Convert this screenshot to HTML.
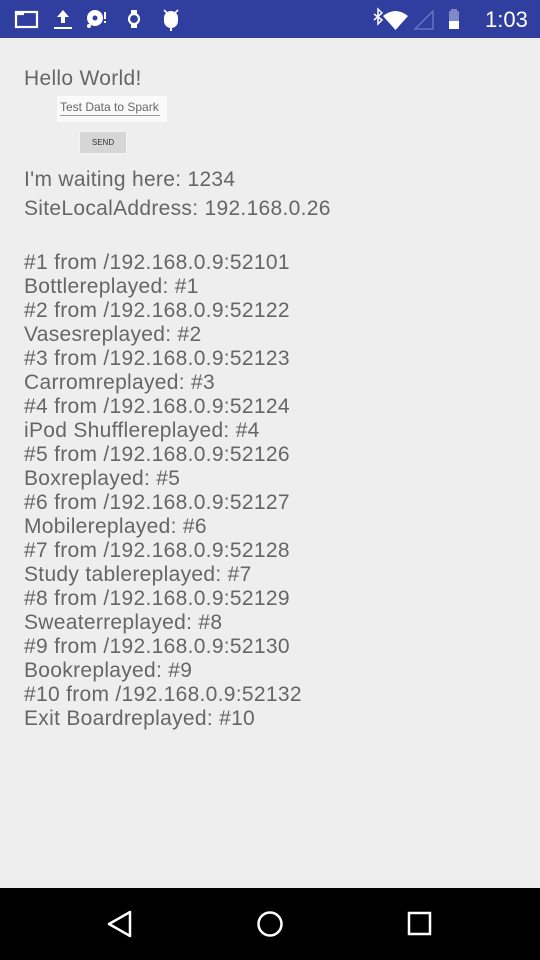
<!DOCTYPE html>
<html><head><style>
body{margin:0;width:540px;height:960px;background:#eeeeee;position:relative;overflow:hidden;font-family:"Liberation Sans",sans-serif;}
.sb{position:absolute;left:0;top:0;width:540px;height:38px;background:#303f9f;}
.nav{position:absolute;left:0;top:888px;width:540px;height:72px;background:#000;}
.t{position:absolute;left:24px;color:#666;font-size:21px;letter-spacing:0.3px;white-space:nowrap;}
.list{position:absolute;left:24px;top:251px;color:#666;font-size:21px;letter-spacing:0.3px;line-height:24px;white-space:pre;}
</style></head><body>
<div class="sb">
<svg width="540" height="38" style="position:absolute;left:0;top:0">
<g fill="none" stroke="#fff" stroke-width="2.2">
<rect x="16" y="12" width="21" height="15"/><path d="M16 14h8"/>
</g>
<path d="M63 10l-6 7h4v6h4v-6h4z M54 27h18v2H54z" fill="#fff"/>
<circle cx="95" cy="18" r="8" fill="#fff"/><circle cx="95" cy="18" r="2.5" fill="#303f9f"/><circle cx="89" cy="26" r="2" fill="#fff"/><rect x="104" y="12" width="2" height="7" fill="#fff"/><rect x="104" y="21" width="2" height="2" fill="#fff"/>
<circle cx="134" cy="19" r="5" fill="none" stroke="#fff" stroke-width="2.2"/><rect x="131" y="10" width="6" height="4" fill="#fff"/><rect x="131" y="24" width="6" height="4" fill="#fff"/>
<path d="M164 18a7 7 0 0 1 14 0v3a7 7 0 0 1-14 0z" fill="#fff"/><rect x="170" y="26" width="2" height="5" fill="#fff"/><path d="M164 10l3 3M178 10l-3 3" stroke="#fff" stroke-width="1.6"/>
<path d="M374 14l8 6-4 4V9l4 4-8 7" fill="none" stroke="#fff" stroke-width="1.5"/>
<path d="M383 16Q395.5 6 408 16L395.5 30z" fill="#fff"/>
<path d="M415 29l18-18v18z" fill="none" stroke="#6673c0" stroke-width="1.5"/>
<rect x="449" y="11" width="10" height="18" fill="#7f89c8"/><rect x="449" y="21" width="10" height="8" fill="#fff"/><rect x="451" y="9" width="6" height="2" fill="#7f89c8"/>
<text x="485" y="27" fill="#fff" font-size="22" font-family="Liberation Sans">1:03</text>
</svg>
</div>
<div class="t" style="top:67px">Hello World!</div>
<div style="position:absolute;left:57px;top:96px;width:110px;height:26px;background:#fafafa"></div>
<div style="position:absolute;left:60px;top:100px;font-size:12px;color:#666;font-family:'Liberation Sans',sans-serif">Test Data to Spark</div>
<div style="position:absolute;left:60px;top:115px;width:100px;height:1px;background:#999"></div>
<div style="position:absolute;left:79px;top:131px;width:48px;height:23px;background:#d6d6d6;border:1px solid #f4f4f4;box-sizing:border-box;font-size:8px;color:#333;text-align:center;line-height:21px">SEND</div>
<div class="t" style="top:168px">I'm waiting here: 1234</div>
<div class="t" style="top:197px">SiteLocalAddress: 192.168.0.26</div>
<div class="list">#1 from /192.168.0.9:52101
Bottlereplayed: #1
#2 from /192.168.0.9:52122
Vasesreplayed: #2
#3 from /192.168.0.9:52123
Carromreplayed: #3
#4 from /192.168.0.9:52124
iPod Shufflereplayed: #4
#5 from /192.168.0.9:52126
Boxreplayed: #5
#6 from /192.168.0.9:52127
Mobilereplayed: #6
#7 from /192.168.0.9:52128
Study tablereplayed: #7
#8 from /192.168.0.9:52129
Sweaterreplayed: #8
#9 from /192.168.0.9:52130
Bookreplayed: #9
#10 from /192.168.0.9:52132
Exit Boardreplayed: #10</div>
<div class="nav">
<svg width="540" height="72" style="position:absolute;left:0;top:0">
<path d="M130 24L109 36l21 12z" fill="none" stroke="#fff" stroke-width="2.5" stroke-linejoin="round"/>
<circle cx="270" cy="36" r="11.5" fill="none" stroke="#fff" stroke-width="2.5"/>
<rect x="409" y="25" width="21" height="21" fill="none" stroke="#fff" stroke-width="2.5"/>
</svg>
</div>
</body></html>
